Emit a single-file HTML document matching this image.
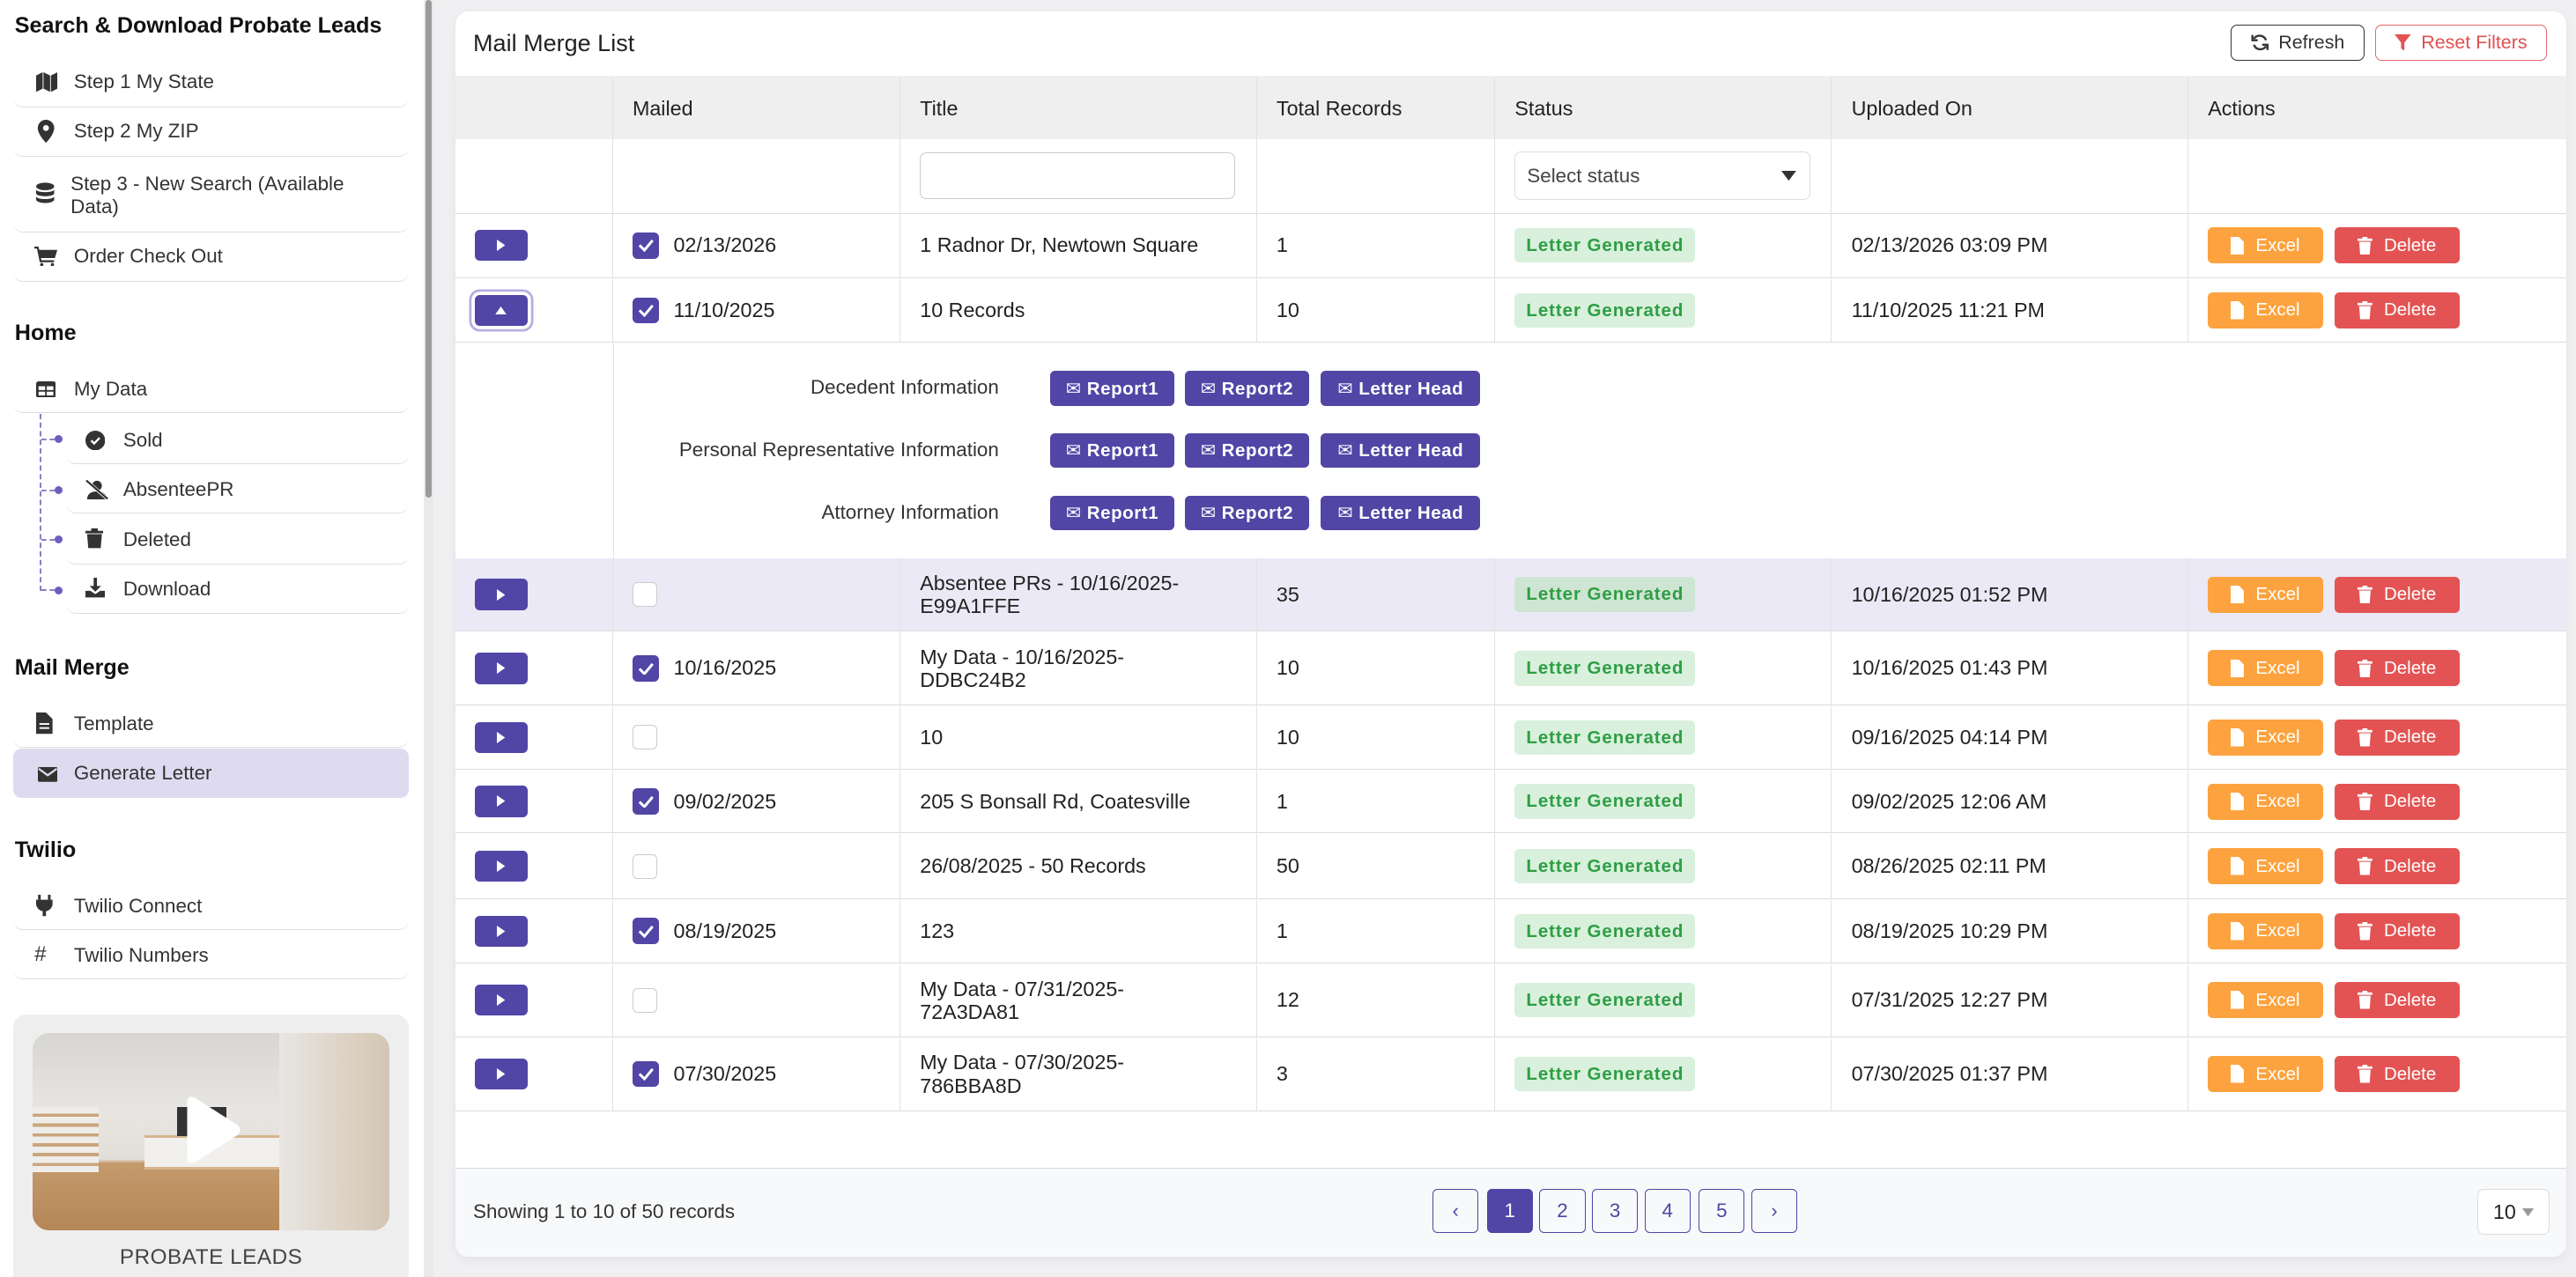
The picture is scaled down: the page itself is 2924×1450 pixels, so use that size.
<!DOCTYPE html>
<html><head><meta charset="utf-8">
<style>
html,body{margin:0;padding:0;overflow:hidden;background:#f0f0f2;width:2924px;height:1450px}
#w{zoom:1.8648;width:1568px;height:778px;position:relative;font-family:"Liberation Sans","DejaVu Sans",sans-serif;color:#222;font-size:12.5px}
.a{position:absolute}
#sb{left:0;top:0;width:258px;height:778px;background:#fff}
#scr{left:258px;top:0;width:6px;height:778px;background:#e9e9e9}
#scr div{position:absolute;left:1px;top:0;width:4px;height:303px;background:#9a9a9a;border-radius:2px}
.h{left:9px;font-size:13.5px;font-weight:bold;color:#111}
.it{left:8px;width:241px;border-bottom:1px solid #ddd;border-radius:0 0 6px 6px;color:#333;font-size:12px}
.it span{position:absolute;left:37px}
.it svg{position:absolute;left:14px}
.sub{left:40px;width:209px}
.sub span{left:35px}.sub svg{left:12px}
#card{left:277px;top:7px;width:1285px;height:758px;background:#fff;border-radius:8px;box-shadow:0 2px 6px rgba(0,0,0,.06);overflow:hidden}
.row{position:absolute;left:0;width:1285px;border-bottom:1px solid #dcdcdc;display:flex}
.row>div{border-right:1px solid #e2e2e2;position:relative;box-sizing:border-box;display:flex;align-items:center;padding-left:12px}
.row>div:last-child{border-right:none}
.c1{width:96px}.c2{width:175px}.c3{width:217px}.c4{width:145px}.c5{width:205px}.c6{width:217px}.c7{width:230px}
.exp{width:32px;height:19px;background:#5145a6;border-radius:3px;display:flex;align-items:center;justify-content:center}
.cb{width:16px;height:16px;background:#5145a6;border-radius:3px;display:flex;align-items:center;justify-content:center;margin-right:9px}
.cbe{width:15px;height:15px;border:1px solid #ccc;border-radius:3px;box-sizing:border-box}
.bd{background:#d8f0dc;color:#2e9e44;font-weight:bold;font-size:11px;padding:0 7px;height:21px;line-height:21px;border-radius:3px;letter-spacing:.5px}
.ex,.de{height:22px;border-radius:3px;color:#fff;font-size:11px;display:flex;align-items:center;justify-content:center;gap:7px}
.ex{background:#fca33f;width:70px;margin-right:7px}.de{background:#e35353;width:76px}
.pb{position:absolute;height:21px;background:#5145a6;color:#fff;border-radius:3px;font-size:11px;font-weight:bold;display:flex;align-items:center;justify-content:center;gap:5px;letter-spacing:.3px}
.lb{position:absolute;right:954px;font-size:12px;color:#333}
.pg{position:absolute;top:717px;width:28px;height:27px;border:1px solid #5145a6;border-radius:3px;box-sizing:border-box;color:#5145a6;font-size:12px;display:flex;align-items:center;justify-content:center}
</style></head><body><div id="w">
<div id="sb" class="a">
<div class="a h" style="top:8px">Search &amp; Download Probate Leads</div>
<div class="a it" style="top:36px;height:29px"><svg width="13" height="12" viewBox="0 0 13 12" style="top:8px"><path d="M0 2l4-2v10l-4 2zM4.5 0l4 2v10l-4-2zM9 2l4-2v10l-4 2z" fill="#333"/></svg><span style="top:7px">Step 1 My State</span></div>
<div class="a it" style="top:66px;height:29px"><svg width="12" height="14" viewBox="0 0 12 14" style="top:7px"><path d="M6 0a5 5 0 0 1 5 5c0 4-5 9-5 9S1 9 1 5a5 5 0 0 1 5-5z" fill="#333"/><circle cx="6" cy="5" r="1.8" fill="#fff"/></svg><span style="top:7px">Step 2 My ZIP</span></div>
<div class="a it" style="top:96px;height:45px"><svg width="11" height="13" viewBox="0 0 11 13" style="top:15px"><ellipse cx="5.5" cy="2.5" rx="5.5" ry="2.3" fill="#333"/><path d="M0 4.5c1 2 10 2 11 0v2.5c-1 2-10 2-11 0zM0 8.7c1 2 10 2 11 0v2c-1 2.5-10 2.5-11 0z" fill="#333"/></svg><span style="top:9px;left:35px;line-height:14px">Step 3 - New Search (Available<br>Data)</span></div>
<div class="a it" style="top:142px;height:29px"><svg width="14" height="12" viewBox="0 0 14 12" style="top:8px;left:13px"><path d="M0 0h2.5l.5 2H14l-1.5 5H4l.3 1.3H12V9.5H3.3L1.6 1.2H0z" fill="#333"/><circle cx="4.5" cy="11" r="1" fill="#333"/><circle cx="11" cy="11" r="1" fill="#333"/></svg><span style="top:7px">Order Check Out</span></div>
<div class="a h" style="top:195px">Home</div>
<div class="a it" style="top:222px;height:29px"><svg width="12" height="10" viewBox="0 0 12 10" style="top:10px"><rect width="12" height="10" rx="1.5" fill="#333"/><rect x="1.5" y="3" width="4" height="2.3" fill="#fff"/><rect x="6.5" y="3" width="4" height="2.3" fill="#fff"/><rect x="1.5" y="6.3" width="4" height="2.3" fill="#fff"/><rect x="6.5" y="6.3" width="4" height="2.3" fill="#fff"/></svg><span style="top:8px">My Data</span></div>
<div class="a" style="left:24px;top:252px;width:0;height:108px;border-left:1.5px dashed #8a80c4"></div>
<div class="a" style="left:25px;top:267px;width:8px;border-top:1.5px dashed #8a80c4"></div>
<div class="a" style="left:25px;top:298px;width:8px;border-top:1.5px dashed #8a80c4"></div>
<div class="a" style="left:25px;top:328px;width:8px;border-top:1.5px dashed #8a80c4"></div>
<div class="a" style="left:25px;top:359px;width:8px;border-top:1.5px dashed #8a80c4"></div>
<div class="a" style="left:33px;top:265px;width:5px;height:5px;border-radius:50%;background:#6a5fbf"></div>
<div class="a" style="left:33px;top:296px;width:5px;height:5px;border-radius:50%;background:#6a5fbf"></div>
<div class="a" style="left:33px;top:326px;width:5px;height:5px;border-radius:50%;background:#6a5fbf"></div>
<div class="a" style="left:33px;top:357px;width:5px;height:5px;border-radius:50%;background:#6a5fbf"></div>
<div class="a it sub" style="top:253px;height:29px"><svg width="12" height="12" viewBox="0 0 12 12" style="top:9px"><circle cx="6" cy="6" r="6" fill="#333"/><path d="M3.5 6l1.8 1.8L8.6 4.4" stroke="#fff" stroke-width="1.3" fill="none"/></svg><span style="top:8px">Sold</span></div>
<div class="a it sub" style="top:283px;height:29px"><svg width="14" height="12" viewBox="0 0 14 12" style="top:9px"><circle cx="7" cy="3.5" r="3" fill="#333"/><path d="M1 12c0-4 3-5 6-5s6 1 6 5z" fill="#333"/><path d="M0 0l14 12" stroke="#fff" stroke-width="2"/><path d="M0.5 0.3l13 11.2" stroke="#333" stroke-width="1.2"/></svg><span style="top:8px">AbsenteePR</span></div>
<div class="a it sub" style="top:314px;height:29px"><svg width="11" height="12" viewBox="0 0 11 12" style="top:8px"><path d="M0 1.5h11V3H0zM3.5 0h4v1.5h-4zM1 3.5h9l-.7 8.5H1.7z" fill="#333"/></svg><span style="top:8px">Deleted</span></div>
<div class="a it sub" style="top:344px;height:29px"><svg width="12" height="12" viewBox="0 0 12 12" style="top:8px"><path d="M5 0h2v5h2.5L6 8.5 2.5 5H5zM0 8h3l3 2 3-2h3v4H0z" fill="#333"/></svg><span style="top:8px">Download</span></div>
<div class="a h" style="top:399px">Mail Merge</div>
<div class="a it" style="top:426px;height:29px"><svg width="10" height="13" viewBox="0 0 10 13" style="top:8px"><path d="M0 0h6l4 4v9H0z" fill="#333"/><path d="M2 7h6M2 9.5h6" stroke="#fff"/></svg><span style="top:8px">Template</span></div>
<div class="a" style="left:8px;top:456px;width:241px;height:30px;background:#dedbf0;border-radius:5px"><svg width="12" height="9" viewBox="0 0 12 9" style="position:absolute;left:15px;top:11px"><rect width="12" height="9" rx="1" fill="#333"/><path d="M0.5 1l5.5 4 5.5-4" stroke="#dedbf0" stroke-width="1.2" fill="none"/></svg><span style="position:absolute;left:37px;top:8px;font-size:12px;color:#333">Generate Letter</span></div>
<div class="a h" style="top:510px">Twilio</div>
<div class="a it" style="top:537px;height:29px"><svg width="10" height="13" viewBox="0 0 10 13" style="top:8px"><path d="M2 0v3M8 0v3" stroke="#333" stroke-width="1.6"/><path d="M0 3h10v3a5 5 0 0 1-4 4v3H4v-3a5 5 0 0 1-4-4z" fill="#333"/></svg><span style="top:8px">Twilio Connect</span></div>
<div class="a it" style="top:567px;height:29px"><span style="top:7px;left:13px;font-size:13px">#</span><span style="top:8px">Twilio Numbers</span></div>
<div class="a" style="left:8px;top:618px;width:241px;height:170px;background:#eee;border-radius:8px">
<div class="a" style="left:12px;top:11px;width:217px;height:120px;border-radius:10px;overflow:hidden;background:linear-gradient(180deg,#d8d6d2 0%,#e8e6e2 40%,#e2ded8 64%,#c49a6c 66%,#b58757 100%)">
<div class="a" style="left:0;top:45px;width:40px;height:40px;background:repeating-linear-gradient(180deg,#efedea 0 4px,#caa57d 4px 6px)"></div>
<div class="a" style="left:68px;top:62px;width:90px;height:18px;background:#f2f0ec;border-top:2px solid #d5b48e;border-bottom:2px solid #d5b48e"></div>
<div class="a" style="left:88px;top:45px;width:30px;height:18px;background:#333"></div>
<div class="a" style="left:150px;top:0;width:67px;height:120px;background:linear-gradient(90deg,#e8e6e3,#ddd2c4 60%,#d4c6b4)"></div>
<svg class="a" style="left:90px;top:38px" width="40" height="44" viewBox="0 0 40 44"><path d="M4 4c0-3 2-4 5-2.5l25 16c3 2 3 5 0 7l-25 16C6 42 4 41 4 38z" fill="#fff"/></svg>
</div>
<div class="a" style="left:0;width:241px;top:140px;text-align:center;font-size:13px;color:#444;letter-spacing:.3px">PROBATE LEADS</div>
</div>
</div>
<div id="scr" class="a"><div></div></div>

<div id="card" class="a">
<div class="a" style="left:11px;top:11px;font-size:14.5px;color:#222">Mail Merge List</div>
<div class="a" style="left:1081px;top:8px;width:80px;height:21px;border:1px solid #333;border-radius:4px;display:flex;align-items:center;justify-content:center;gap:6px;font-size:11.5px;color:#333"><svg width="11" height="11" viewBox="0 0 12 12"><path d="M10 4.5A4.5 4.5 0 0 0 2 3.5M2 7.5A4.5 4.5 0 0 0 10 8.5" stroke="#333" stroke-width="1.4" fill="none"/><path d="M1 1v3.5h3.5M11 11V7.5H7.5" stroke="#333" stroke-width="1.4" fill="none"/></svg>Refresh</div>
<div class="a" style="left:1169px;top:8px;width:103px;height:21px;border:1px solid #e36a6a;border-radius:4px;display:flex;align-items:center;justify-content:center;gap:6px;font-size:11.5px;color:#e05050"><svg width="10" height="10" viewBox="0 0 10 10"><path d="M0 0h10L6 5v5L4 8.5V5z" fill="#e35353"/></svg>Reset Filters</div>

<div class="row" style="top:39px;height:38px;background:#efefef;border-bottom:none;padding-top:1px"><div class="c1"></div><div class="c2">Mailed</div><div class="c3">Title</div><div class="c4">Total Records</div><div class="c5">Status</div><div class="c6">Uploaded On</div><div class="c7">Actions</div></div>
<div class="row" style="top:77px;height:46px"><div class="c1"></div><div class="c2"></div><div class="c3"><div style="width:192px;height:28px;border:1px solid #ccc;border-radius:4px;box-sizing:border-box"></div></div><div class="c4"></div><div class="c5"><div style="width:180px;height:30px;border:1px solid #ddd;border-radius:4px;box-sizing:border-box;display:flex;align-items:center;justify-content:space-between;padding:0 8px 0 7px;color:#444;font-size:12px">Select status<svg width="9" height="6" viewBox="0 0 9 6"><path d="M0 0h9L4.5 6z" fill="#333"/></svg></div></div><div class="c6"></div><div class="c7"></div></div>

<div class="row" style="top:123px;height:39px"><div class="c1"><div class="exp"><svg width="5" height="7"><path d="M0 0l5 3.5L0 7z" fill="#fff"/></svg></div></div><div class="c2"><div class="cb"><svg width="10" height="8"><path d="M1 4l3 3 5-6" stroke="#fff" stroke-width="1.6" fill="none"/></svg></div>02/13/2026</div><div class="c3">1 Radnor Dr, Newtown Square</div><div class="c4">1</div><div class="c5"><span class="bd">Letter Generated</span></div><div class="c6">02/13/2026 03:09 PM</div><div class="c7"><div class="ex"><svg width="8" height="11" viewBox="0 0 8 11"><path d="M0 0h5l3 3v8H0z" fill="#fff"/></svg>Excel</div><div class="de"><svg width="9" height="11" viewBox="0 0 9 11"><path d="M0 1h9v1.5H0zM3 0h3v1H3zM1 3h7l-.6 8H1.6z" fill="#fff"/></svg>Delete</div></div></div>
<div class="row" style="top:163px;height:38px"><div class="c1"><div class="exp" style="box-shadow:0 0 0 2px #fff,0 0 0 3.5px #b5afe0"><svg width="7" height="5"><path d="M0 5l3.5-5L7 5z" fill="#fff"/></svg></div></div><div class="c2"><div class="cb"><svg width="10" height="8"><path d="M1 4l3 3 5-6" stroke="#fff" stroke-width="1.6" fill="none"/></svg></div>11/10/2025</div><div class="c3">10 Records</div><div class="c4">10</div><div class="c5"><span class="bd">Letter Generated</span></div><div class="c6">11/10/2025 11:21 PM</div><div class="c7"><div class="ex"><svg width="8" height="11" viewBox="0 0 8 11"><path d="M0 0h5l3 3v8H0z" fill="#fff"/></svg>Excel</div><div class="de"><svg width="9" height="11" viewBox="0 0 9 11"><path d="M0 1h9v1.5H0zM3 0h3v1H3zM1 3h7l-.6 8H1.6z" fill="#fff"/></svg>Delete</div></div></div>

<div class="a" style="left:0;top:202px;width:1285px;height:131px;border-bottom:1px solid #dcdcdc">
<div class="a" style="left:96px;top:0;height:131px;border-left:1px solid #e2e2e2"></div>
<div class="lb" style="top:20px">Decedent Information</div>
<div class="lb" style="top:58px">Personal Representative Information</div>
<div class="lb" style="top:96px">Attorney Information</div>
</div>

<div class="row" style="top:333px;height:44px;background:#ebe9f5"><div class="c1"><div class="exp"><svg width="5" height="7"><path d="M0 0l5 3.5L0 7z" fill="#fff"/></svg></div></div><div class="c2"><div class="cbe" style="background:#fff"></div></div><div class="c3" style="line-height:14px">Absentee PRs - 10/16/2025-<br>E99A1FFE</div><div class="c4">35</div><div class="c5"><span class="bd" style="background:#cfe5d3">Letter Generated</span></div><div class="c6">10/16/2025 01:52 PM</div><div class="c7"><div class="ex"><svg width="8" height="11" viewBox="0 0 8 11"><path d="M0 0h5l3 3v8H0z" fill="#fff"/></svg>Excel</div><div class="de"><svg width="9" height="11" viewBox="0 0 9 11"><path d="M0 1h9v1.5H0zM3 0h3v1H3zM1 3h7l-.6 8H1.6z" fill="#fff"/></svg>Delete</div></div></div>
<div class="row" style="top:378px;height:44px"><div class="c1"><div class="exp"><svg width="5" height="7"><path d="M0 0l5 3.5L0 7z" fill="#fff"/></svg></div></div><div class="c2"><div class="cb"><svg width="10" height="8"><path d="M1 4l3 3 5-6" stroke="#fff" stroke-width="1.6" fill="none"/></svg></div>10/16/2025</div><div class="c3" style="line-height:14px">My Data - 10/16/2025-<br>DDBC24B2</div><div class="c4">10</div><div class="c5"><span class="bd">Letter Generated</span></div><div class="c6">10/16/2025 01:43 PM</div><div class="c7"><div class="ex"><svg width="8" height="11" viewBox="0 0 8 11"><path d="M0 0h5l3 3v8H0z" fill="#fff"/></svg>Excel</div><div class="de"><svg width="9" height="11" viewBox="0 0 9 11"><path d="M0 1h9v1.5H0zM3 0h3v1H3zM1 3h7l-.6 8H1.6z" fill="#fff"/></svg>Delete</div></div></div>
<div class="row" style="top:423px;height:38px"><div class="c1"><div class="exp"><svg width="5" height="7"><path d="M0 0l5 3.5L0 7z" fill="#fff"/></svg></div></div><div class="c2"><div class="cbe"></div></div><div class="c3">10</div><div class="c4">10</div><div class="c5"><span class="bd">Letter Generated</span></div><div class="c6">09/16/2025 04:14 PM</div><div class="c7"><div class="ex"><svg width="8" height="11" viewBox="0 0 8 11"><path d="M0 0h5l3 3v8H0z" fill="#fff"/></svg>Excel</div><div class="de"><svg width="9" height="11" viewBox="0 0 9 11"><path d="M0 1h9v1.5H0zM3 0h3v1H3zM1 3h7l-.6 8H1.6z" fill="#fff"/></svg>Delete</div></div></div>
<div class="row" style="top:462px;height:38px"><div class="c1"><div class="exp"><svg width="5" height="7"><path d="M0 0l5 3.5L0 7z" fill="#fff"/></svg></div></div><div class="c2"><div class="cb"><svg width="10" height="8"><path d="M1 4l3 3 5-6" stroke="#fff" stroke-width="1.6" fill="none"/></svg></div>09/02/2025</div><div class="c3">205 S Bonsall Rd, Coatesville</div><div class="c4">1</div><div class="c5"><span class="bd">Letter Generated</span></div><div class="c6">09/02/2025 12:06 AM</div><div class="c7"><div class="ex"><svg width="8" height="11" viewBox="0 0 8 11"><path d="M0 0h5l3 3v8H0z" fill="#fff"/></svg>Excel</div><div class="de"><svg width="9" height="11" viewBox="0 0 9 11"><path d="M0 1h9v1.5H0zM3 0h3v1H3zM1 3h7l-.6 8H1.6z" fill="#fff"/></svg>Delete</div></div></div>
<div class="row" style="top:501px;height:39px"><div class="c1"><div class="exp"><svg width="5" height="7"><path d="M0 0l5 3.5L0 7z" fill="#fff"/></svg></div></div><div class="c2"><div class="cbe"></div></div><div class="c3">26/08/2025 - 50 Records</div><div class="c4">50</div><div class="c5"><span class="bd">Letter Generated</span></div><div class="c6">08/26/2025 02:11 PM</div><div class="c7"><div class="ex"><svg width="8" height="11" viewBox="0 0 8 11"><path d="M0 0h5l3 3v8H0z" fill="#fff"/></svg>Excel</div><div class="de"><svg width="9" height="11" viewBox="0 0 9 11"><path d="M0 1h9v1.5H0zM3 0h3v1H3zM1 3h7l-.6 8H1.6z" fill="#fff"/></svg>Delete</div></div></div>
<div class="row" style="top:541px;height:38px"><div class="c1"><div class="exp"><svg width="5" height="7"><path d="M0 0l5 3.5L0 7z" fill="#fff"/></svg></div></div><div class="c2"><div class="cb"><svg width="10" height="8"><path d="M1 4l3 3 5-6" stroke="#fff" stroke-width="1.6" fill="none"/></svg></div>08/19/2025</div><div class="c3">123</div><div class="c4">1</div><div class="c5"><span class="bd">Letter Generated</span></div><div class="c6">08/19/2025 10:29 PM</div><div class="c7"><div class="ex"><svg width="8" height="11" viewBox="0 0 8 11"><path d="M0 0h5l3 3v8H0z" fill="#fff"/></svg>Excel</div><div class="de"><svg width="9" height="11" viewBox="0 0 9 11"><path d="M0 1h9v1.5H0zM3 0h3v1H3zM1 3h7l-.6 8H1.6z" fill="#fff"/></svg>Delete</div></div></div>
<div class="row" style="top:580px;height:44px"><div class="c1"><div class="exp"><svg width="5" height="7"><path d="M0 0l5 3.5L0 7z" fill="#fff"/></svg></div></div><div class="c2"><div class="cbe"></div></div><div class="c3" style="line-height:14px">My Data - 07/31/2025-<br>72A3DA81</div><div class="c4">12</div><div class="c5"><span class="bd">Letter Generated</span></div><div class="c6">07/31/2025 12:27 PM</div><div class="c7"><div class="ex"><svg width="8" height="11" viewBox="0 0 8 11"><path d="M0 0h5l3 3v8H0z" fill="#fff"/></svg>Excel</div><div class="de"><svg width="9" height="11" viewBox="0 0 9 11"><path d="M0 1h9v1.5H0zM3 0h3v1H3zM1 3h7l-.6 8H1.6z" fill="#fff"/></svg>Delete</div></div></div>
<div class="row" style="top:625px;height:44px"><div class="c1"><div class="exp"><svg width="5" height="7"><path d="M0 0l5 3.5L0 7z" fill="#fff"/></svg></div></div><div class="c2"><div class="cb"><svg width="10" height="8"><path d="M1 4l3 3 5-6" stroke="#fff" stroke-width="1.6" fill="none"/></svg></div>07/30/2025</div><div class="c3" style="line-height:14px">My Data - 07/30/2025-<br>786BBA8D</div><div class="c4">3</div><div class="c5"><span class="bd">Letter Generated</span></div><div class="c6">07/30/2025 01:37 PM</div><div class="c7"><div class="ex"><svg width="8" height="11" viewBox="0 0 8 11"><path d="M0 0h5l3 3v8H0z" fill="#fff"/></svg>Excel</div><div class="de"><svg width="9" height="11" viewBox="0 0 9 11"><path d="M0 1h9v1.5H0zM3 0h3v1H3zM1 3h7l-.6 8H1.6z" fill="#fff"/></svg>Delete</div></div></div>

<div class="a" style="left:0;top:704px;width:1285px;height:54px;background:#f8f9fa;border-top:1px solid #d8d8d8"></div>
<div class="a" style="left:11px;top:724px;font-size:12px;color:#333">Showing 1 to 10 of 50 records</div>
<div class="pg" style="left:595px">&#8249;</div>
<div class="pg" style="left:628px;background:#5145a6;color:#fff">1</div>
<div class="pg" style="left:660px">2</div>
<div class="pg" style="left:692px">3</div>
<div class="pg" style="left:724px">4</div>
<div class="pg" style="left:757px">5</div>
<div class="pg" style="left:789px">&#8250;</div>
<div class="a" style="left:1231px;top:717px;width:44px;height:28px;border:1px solid #ddd;border-radius:4px;box-sizing:border-box;background:#fff;font-size:12.5px;display:flex;align-items:center;justify-content:center;gap:4px">10<svg width="7" height="5"><path d="M0 0h7L3.5 5z" fill="#999"/></svg></div>
</div>

<div class="pb" style="left:639px;top:226px;width:76px">&#9993; Report1</div>
<div class="pb" style="left:721px;top:226px;width:76px">&#9993; Report2</div>
<div class="pb" style="left:804px;top:226px;width:97px">&#9993; Letter Head</div>
<div class="pb" style="left:639px;top:264px;width:76px">&#9993; Report1</div>
<div class="pb" style="left:721px;top:264px;width:76px">&#9993; Report2</div>
<div class="pb" style="left:804px;top:264px;width:97px">&#9993; Letter Head</div>
<div class="pb" style="left:639px;top:302px;width:76px">&#9993; Report1</div>
<div class="pb" style="left:721px;top:302px;width:76px">&#9993; Report2</div>
<div class="pb" style="left:804px;top:302px;width:97px">&#9993; Letter Head</div>
</div></body></html>
